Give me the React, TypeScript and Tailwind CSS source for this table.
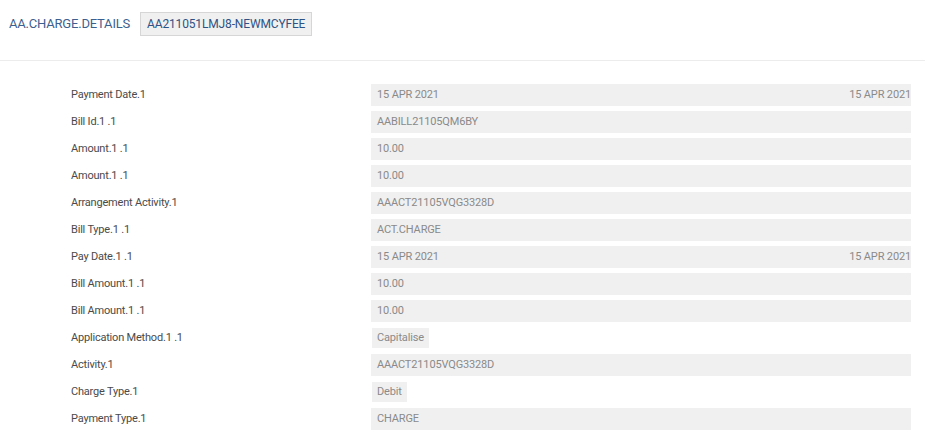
import React from "react";

type Row = { label: string; value: string; right?: string; chip?: boolean };

const rows: Row[] = [
  { label: "Payment Date.1", value: "15 APR 2021", right: "15 APR 2021" },
  { label: "Bill Id.1 .1", value: "AABILL21105QM6BY" },
  { label: "Amount.1 .1", value: "10.00" },
  { label: "Amount.1 .1", value: "10.00" },
  { label: "Arrangement Activity.1", value: "AAACT21105VQG3328D" },
  { label: "Bill Type.1 .1", value: "ACT.CHARGE" },
  { label: "Pay Date.1 .1", value: "15 APR 2021", right: "15 APR 2021" },
  { label: "Bill Amount.1 .1", value: "10.00" },
  { label: "Bill Amount.1 .1", value: "10.00" },
  { label: "Application Method.1 .1", value: "Capitalise", chip: true },
  { label: "Activity.1", value: "AAACT21105VQG3328D" },
  { label: "Charge Type.1", value: "Debit", chip: true },
  { label: "Payment Type.1", value: "CHARGE" },
];

export default function App() {
  return (
    <div
      className="w-[925px] h-[436px] bg-white overflow-hidden"
      style={{ fontFamily: "Roboto, 'Liberation Sans', sans-serif" }}
    >
      <div className="flex items-center h-[47px] pl-[9px] pt-[1px]">
        <span className="text-[13px] text-[#3d5f8f] tracking-[-0.2px]">AA.CHARGE.DETAILS</span>
        <span className="ml-[10px] h-[24px] px-[6px] flex items-center bg-[#f0f0f0] border border-[#d6d6d6] text-[12px] tracking-[-0.15px] text-[#2f5285]">
          AA211051LMJ8-NEWMCYFEE
        </span>
      </div>
      <div className="mt-[13px] h-px bg-[#ececec]" />
      <div className="pt-[23px] flex flex-col gap-[5px]">
        {rows.map((r, i) => (
          <div key={i} className="flex items-center h-[22px]">
            <div className="w-[371px] pl-[71px] text-[11px] tracking-[-0.2px] text-[#4a4a4a]">{r.label}</div>
            {r.chip ? (
              <div className="flex-1 flex">
                <span className="ml-[1px] h-[20px] px-[5px] flex items-center bg-[#f0f0f0] text-[11px] tracking-[-0.15px] text-[#8a8a8a]">
                  {r.value}
                </span>
              </div>
            ) : (
              <div className="w-[540px] h-[22px] bg-[#f0f0f0] flex items-center justify-between pl-[6px] text-[11px] tracking-[-0.15px] text-[#8a8a8a]">
                <span>{r.value}</span>
                {r.right && <span>{r.right}</span>}
              </div>
            )}
          </div>
        ))}
      </div>
    </div>
  );
}
